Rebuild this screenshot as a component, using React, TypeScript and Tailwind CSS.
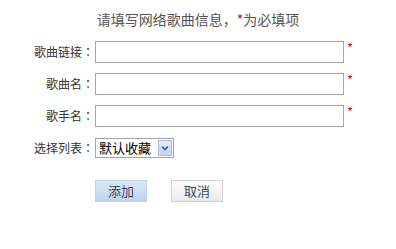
import React from 'react';

const font = { fontFamily: '"Noto Sans CJK SC", "Liberation Sans", sans-serif' };
const colonFont = { fontFamily: '"Noto Sans CJK TC", "Noto Sans CJK SC", sans-serif' };

const Label: React.FC<{ text: string; lh: string }> = ({ text, lh }) => (
  <div className={`w-[95px] shrink-0 pr-[1px] text-right text-[12px] text-[#333] whitespace-nowrap ${lh}`}>
    {text}
    <span style={colonFont}>：</span>
  </div>
);

const Row: React.FC<{ label: string; children: React.ReactNode }> = ({ label, children }) => (
  <div className="flex items-start">
    <Label text={label} lh="leading-[22px]" />
    {children}
  </div>
);

const Required = () => (
  <span className="ml-[3px] mt-[1px] text-[13px] leading-[12px] text-[#b0202a]">*</span>
);

export default function App() {
  return (
    <div className="w-[396px] h-[249px] bg-white pt-[9px]" style={font}>
      <div className="h-[20px] text-center text-[14px] leading-[20px] text-[#555]">
        请填写网络歌曲信息，<span className="text-[#b0202a]">*</span>为必填项
      </div>

      <div className="mt-[12px] flex flex-col gap-[10px]">
        <Row label="歌曲链接">
          <input className="w-[249px] h-[22px] border border-[#a5a5a5] outline-none" />
          <Required />
        </Row>
        <Row label="歌曲名">
          <input className="w-[249px] h-[22px] border border-[#a5a5a5] outline-none" />
          <Required />
        </Row>
        <Row label="歌手名">
          <input className="w-[249px] h-[22px] border border-[#a5a5a5] outline-none" />
          <Required />
        </Row>
      </div>

      <div className="mt-[11px] flex items-center">
        <Label text="选择列表" lh="leading-[20px]" />
        <div className="flex h-[20px] w-[79px] items-center justify-between border border-[#a5a5a5] pl-[3px] pr-[1px]">
          <span className="text-[13px] leading-[18px] text-black">默认收藏</span>
          <span className="flex h-[16px] w-[14px] items-center justify-center border border-[#a9bde0] bg-gradient-to-b from-[#e3ecfa] to-[#c4d5f1]">
            <svg width="8" height="6" viewBox="0 0 8 6">
              <path d="M1 1.5 L4 4.5 L7 1.5" fill="none" stroke="#3b5a9a" strokeWidth="1.6" />
            </svg>
          </span>
        </div>
      </div>

      <div className="mt-[22px] flex pl-[95px] gap-[24px]">
        <button className="h-[22px] w-[52px] border border-[#c3d2e8] bg-gradient-to-b from-[#dbe7f8] to-[#bed2ef] text-[13px] leading-[20px] text-[#3a4a5c]">
          添加
        </button>
        <button className="h-[22px] w-[52px] border border-[#d2d2d2] bg-gradient-to-b from-[#ffffff] to-[#e9e9e9] text-[13px] leading-[20px] text-[#3a4a5c]">
          取消
        </button>
      </div>
    </div>
  );
}
